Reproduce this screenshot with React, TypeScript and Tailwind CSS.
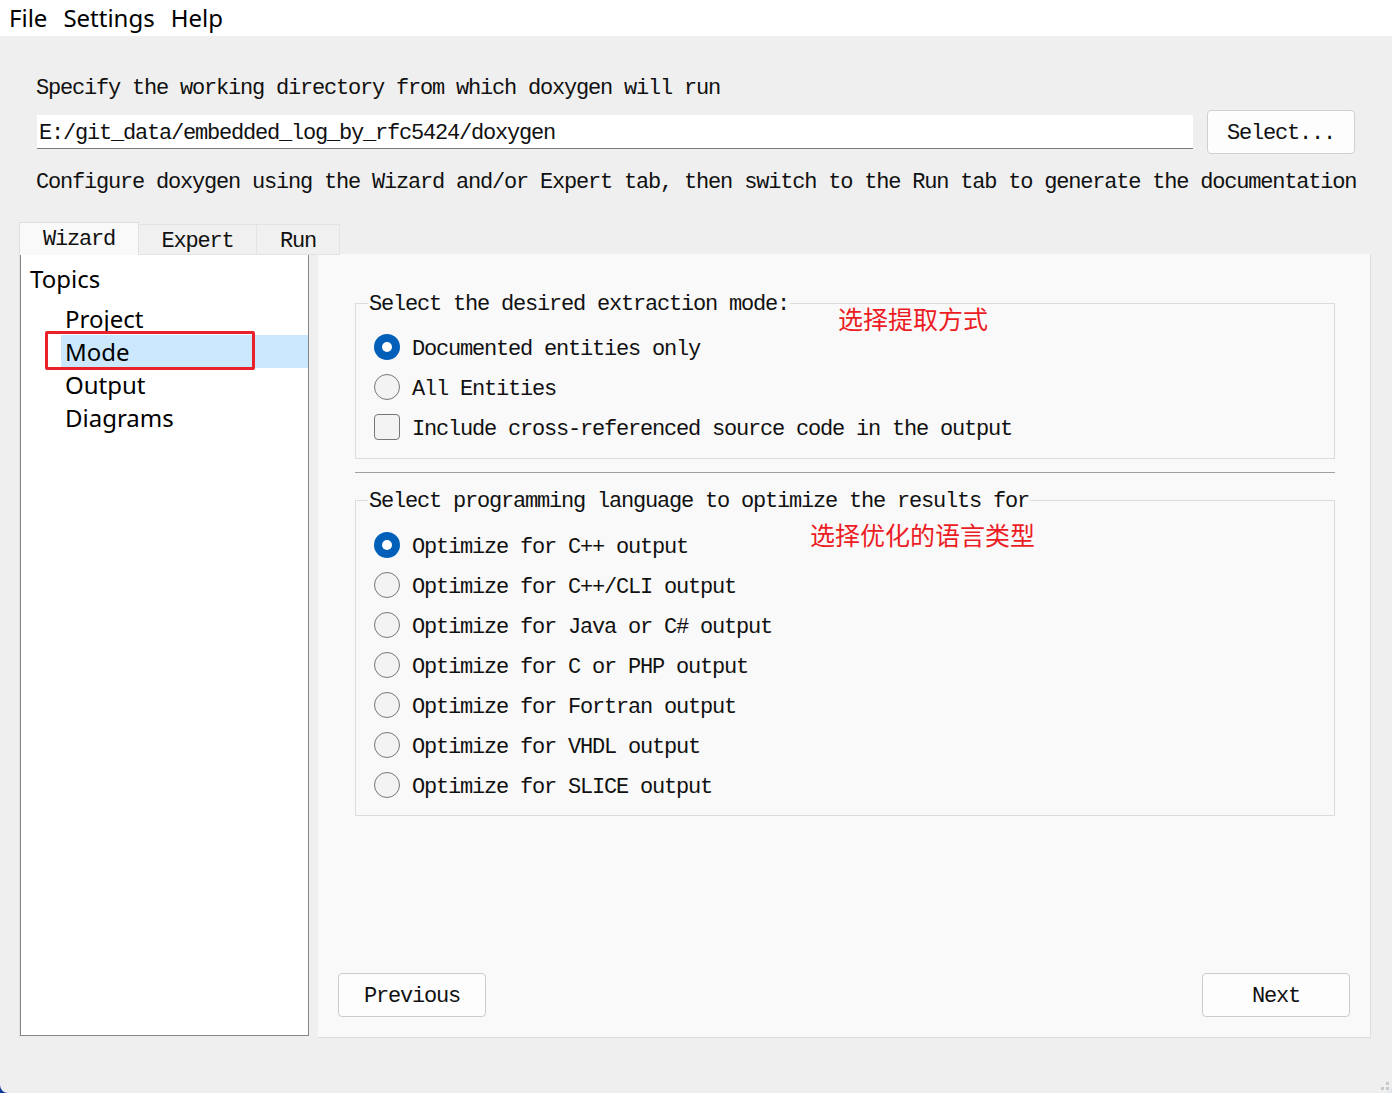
const mono = "font-['Liberation_Mono',monospace] text-[22px] leading-[24px] tracking-[-1.2px] text-[#111111]";
const sans = "font-['Noto_Sans',sans-serif] text-[24px] text-black";

function Radio({ checked }: { checked?: boolean }) {
  if (checked) {
    return (
      <span className="w-[26px] h-[26px] rounded-full bg-[#005fb8] flex items-center justify-center shrink-0">
        <span className="w-[10px] h-[10px] rounded-full bg-white" />
      </span>
    );
  }
  return <span className="w-[26px] h-[26px] rounded-full border-[1.5px] border-[#767676] bg-[#f3f3f3] shrink-0" />;
}

function Check() {
  return <span className="w-[26px] h-[26px] rounded-[4px] border-[1.5px] border-[#767676] bg-[#f3f3f3] shrink-0" />;
}

function Row({ children, control }: { children: string; control: React.ReactNode }) {
  return (
    <div className="h-[40px] flex items-center gap-[12px] pl-[18px]">
      {control}
      <span className={`pt-[5px] ${mono}`}>{children}</span>
    </div>
  );
}

const languages = [
  'Optimize for C++ output',
  'Optimize for C++/CLI output',
  'Optimize for Java or C# output',
  'Optimize for C or PHP output',
  'Optimize for Fortran output',
  'Optimize for VHDL output',
  'Optimize for SLICE output',
];

export default function App() {
  return (
    <div className="w-[1392px] h-[1093px] bg-gradient-to-r from-[#0a3a9a] to-[#e3e8ef] overflow-hidden">
      <div className="relative w-full h-full bg-[#efefef] rounded-b-[8px] flex flex-col">
        {/* menu bar */}
        <div className={`h-[36px] bg-white flex items-center gap-[16px] pl-[9px] ${sans}`}>
          <span>File</span>
          <span>Settings</span>
          <span>Help</span>
        </div>

        <div className="pl-[36px] pr-[36px]">
          <div className={`mt-[41px] ${mono}`}>Specify the working directory from which doxygen will run</div>
          <div className="mt-[9px] flex items-center gap-[14px]">
            <div className={`ml-px w-[1156px] h-[34px] bg-white border-b border-[#7c7c7c] flex items-center pl-[2px] pt-[5px] ${mono}`}>
              E:/git_data/embedded_log_by_rfc5424/doxygen
            </div>
            <button className={`w-[148px] h-[44px] rounded-[4px] bg-[#fdfdfd] border border-[#d0d0d0] pt-[3px] ${mono}`}>Select...</button>
          </div>
          <div className={`mt-[17px] ${mono} whitespace-nowrap`}>
            Configure doxygen using the Wizard and/or Expert tab, then switch to the Run tab to generate the documentation
          </div>
        </div>

        {/* tabs */}
        <div className="mt-[27px] ml-[19px] flex items-end relative z-10 -mb-px">
          <div className={`w-[120px] h-[33px] bg-[#f9f9f9] border border-b-0 border-[#e0e0e0] flex items-center justify-center pt-[2px] ${mono}`}>Wizard</div>
          <div className={`w-[118px] h-[31px] bg-[#f0f0f0] border border-l-0 border-[#e3e3e3] flex items-center justify-center pt-[5px] ${mono}`}>Expert</div>
          <div className={`w-[83px] h-[31px] bg-[#f0f0f0] border border-l-0 border-[#e3e3e3] flex items-center justify-center pt-[5px] ${mono}`}>Run</div>
        </div>

        <div className="ml-[19px] w-[1352px] h-[784px] flex border-l border-[#e0e0e0]">
          {/* topics tree */}
          <div className="relative w-[289px] h-[782px] bg-white border border-[#82878e] pt-[7px]">
            <div className={`pl-[9px] leading-[33px] ${sans}`}>Topics</div>
            <div className={`mt-[7px] leading-[33px] ${sans}`}>
              <div className="ml-[40px] pl-[4px]">Project</div>
              <div className="ml-[40px] pl-[4px] bg-[#cce8ff]">Mode</div>
              <div className="ml-[40px] pl-[4px]">Output</div>
              <div className="ml-[40px] pl-[4px]">Diagrams</div>
            </div>
            <div className="absolute left-[24px] top-[76px] w-[210px] h-[39px] border-[3px] border-[#e8212a] rounded-[2px]" />
          </div>
          <div className="w-[9px]" />

          {/* wizard page */}
          <div className="relative flex-1 bg-[#f9f9f9] border-r border-b border-[#dedede] flex flex-col">
            <fieldset className="mt-[35px] ml-[37px] mr-[35px] border border-[#dcdcdc] pt-[10px] pb-[11px]">
              <legend className={`ml-[12px] px-[1px] pt-[4px] ${mono}`}>Select the desired extraction mode:</legend>
              <Row control={<Radio checked />}>Documented entities only</Row>
              <Row control={<Radio />}>All Entities</Row>
              <Row control={<Check />}>Include cross-referenced source code in the output</Row>
            </fieldset>

            <div className="mt-[13px] ml-[37px] mr-[35px] h-px bg-[#a0a0a0]" />

            <fieldset className="mt-[13px] ml-[37px] mr-[35px] border border-[#dcdcdc] pt-[11px] pb-[10px]">
              <legend className={`ml-[12px] px-[1px] pt-[4px] ${mono}`}>Select programming language to optimize the results for</legend>
              {languages.map((l, i) => (
                <Row key={l} control={<Radio checked={i === 0} />}>{l}</Row>
              ))}
            </fieldset>

            {/* annotations */}
            <div className="absolute left-[520px] top-[49px] font-['Noto_Sans_CJK_SC',sans-serif] text-[25px] leading-[30px] text-[#ec1c24]">选择提取方式</div>
            <div className="absolute left-[492px] top-[265px] font-['Noto_Sans_CJK_SC',sans-serif] text-[25px] leading-[30px] text-[#ec1c24]">选择优化的语言类型</div>

            <div className="mt-auto px-[20px] pb-[20px] flex justify-between">
              <button className={`w-[148px] h-[44px] rounded-[4px] bg-[#fdfdfd] border border-[#cccccc] pt-[4px] ${mono}`}>Previous</button>
              <button className={`w-[148px] h-[44px] rounded-[4px] bg-[#fdfdfd] border border-[#cccccc] pt-[4px] ${mono}`}>Next</button>
            </div>
          </div>
        </div>

        {/* size grip */}
        <div className="absolute right-[3px] bottom-[3px] grid grid-cols-2 gap-[2px]">
          <span className="w-[3px] h-[3px]" />
          <span className="w-[3px] h-[3px] bg-[#c8c8c8]" />
          <span className="w-[3px] h-[3px] bg-[#c8c8c8]" />
          <span className="w-[3px] h-[3px] bg-[#c8c8c8]" />
        </div>
      </div>
    </div>
  );
}
